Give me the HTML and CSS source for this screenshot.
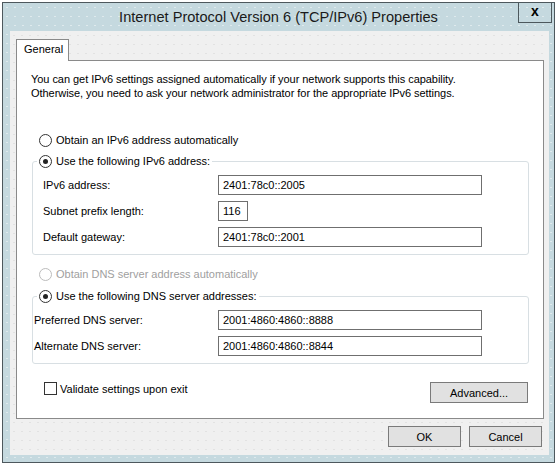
FILE: index.html
```html
<!DOCTYPE html>
<html lang="en">
<head>
    <meta charset="UTF-8">
    <title>Internet Protocol Version 6 (TCP/IPv6) Properties</title>
    <link rel="stylesheet" href="styles.css">
</head>
<body>
    <div class="window">
        <div class="titlebar">
            <span class="title">Internet Protocol Version 6 (TCP/IPv6) Properties</span>
            <span class="close">x</span>
        </div>

        <div class="client">
            <div class="tabs">
                <div class="tab">General</div>
            </div>

            <div class="panel">
                <p class="intro">You can get IPv6 settings assigned automatically if your network supports this capability.<br>Otherwise, you need to ask your network administrator for the appropriate IPv6 settings.</p>

                <label class="option first"><span class="radio"></span>Obtain an IPv6 address automatically</label>

                <fieldset class="group ip-group">
                    <legend><span class="radio checked"></span>Use the following IPv6 address:</legend>
                    <div class="row">
                        <span class="label">IPv6 address:</span>
                        <input class="field" type="text" value="2401:78c0::2005" readonly>
                    </div>
                    <div class="row">
                        <span class="label">Subnet prefix length:</span>
                        <input class="field short" type="text" value="116" readonly>
                    </div>
                    <div class="row">
                        <span class="label">Default gateway:</span>
                        <input class="field" type="text" value="2401:78c0::2001" readonly>
                    </div>
                </fieldset>

                <label class="option disabled"><span class="radio"></span>Obtain DNS server address automatically</label>

                <fieldset class="group dns-group">
                    <legend><span class="radio checked"></span>Use the following DNS server addresses:</legend>
                    <div class="row">
                        <span class="label">Preferred DNS server:</span>
                        <input class="field" type="text" value="2001:4860:4860::8888" readonly>
                    </div>
                    <div class="row">
                        <span class="label">Alternate DNS server:</span>
                        <input class="field" type="text" value="2001:4860:4860::8844" readonly>
                    </div>
                </fieldset>

                <div class="panel-foot">
                    <label class="check"><span class="box"></span>Validate settings upon exit</label>
                    <button class="btn advanced">Advanced...</button>
                </div>
            </div>

            <div class="actions">
                <button class="btn">OK</button>
                <button class="btn">Cancel</button>
            </div>
        </div>
    </div>
</body>
</html>
```

FILE: styles.css
```css
:root {
    --frame-color: #c5d9df;
    --frame-border: #4d585d;
    --face-color: #f0f0f0;
    --panel-border: #8a8a8a;
    --group-border: #d8dfe3;
    --text-color: #000;
}

* {
    box-sizing: border-box;
    margin: 0;
    padding: 0;
}

body {
    font-family: "Liberation Sans", Arial, sans-serif;
    font-size: 11px;
    color: var(--text-color);
    background: #fff;
}

.window {
    position: relative;
    width: 553px;
    height: 461px;
    margin: 2px 0 0 2px;
    border: 1px solid var(--frame-border);
    background-color: var(--frame-color);
    background-image: radial-gradient(circle, rgba(255,255,255,0.45) 0.7px, transparent 1px);
    background-size: 8px 9px;
}

.titlebar {
    height: 28px;
    display: flex;
    align-items: center;
    justify-content: center;
    padding-bottom: 1px;
}

.title {
    font-size: 14.6px;
    color: #1a1a1a;
}

.close {
    position: absolute;
    top: -1px;
    right: 2px;
    width: 34px;
    height: 21px;
    border: 1px solid var(--frame-border);
    display: flex;
    align-items: center;
    justify-content: center;
    font-size: 14px;
    font-weight: bold;
    line-height: 1;
    padding-bottom: 3px;
}

.client {
    width: 539px;
    height: 424px;
    margin-left: 7px;
    padding: 8px 0 0 6px;
    background-color: var(--face-color);
    background-image: radial-gradient(circle, rgba(0,0,0,0.06) 0.7px, transparent 1px);
    background-size: 8px 9px;
}

.tabs {
    display: flex;
}

.tab {
    position: relative;
    z-index: 1;
    width: 53px;
    height: 22px;
    margin-bottom: -1px;
    padding: 3px 0 0 7px;
    border: 1px solid var(--panel-border);
    border-bottom: none;
    background: #fff;
}

.panel {
    width: 528px;
    height: 359px;
    border: 1px solid var(--panel-border);
    background: #fff;
    padding-top: 11px;
}

.intro {
    margin-left: 14px;
    line-height: 14px;
    letter-spacing: -0.05px;
}

.option {
    display: flex;
    align-items: center;
    height: 16px;
    margin-left: 22px;
}

.option.first {
    margin-top: 32px;
}

.option.disabled {
    margin-top: 11px;
    color: #a0a0a0;
}

.radio {
    width: 13px;
    height: 13px;
    margin-right: 4px;
    border: 1px solid #333;
    border-radius: 50%;
    background: #fff;
    display: flex;
    align-items: center;
    justify-content: center;
    flex-shrink: 0;
}

.radio.checked::after {
    content: "";
    width: 5px;
    height: 5px;
    border-radius: 50%;
    background: #222;
}

.disabled .radio {
    border-color: #bcbcbc;
}

.group {
    width: 497px;
    margin-left: 15px;
    border: 1px solid var(--group-border);
    border-radius: 3px;
    padding: 6px 0 7px 0;
}

.group legend {
    display: flex;
    align-items: center;
    height: 16px;
    margin-left: 4px;
    padding: 0 2px;
}

.ip-group {
    margin-top: 5px;
}

.dns-group {
    margin-top: 6px;
}

.row {
    display: flex;
    align-items: center;
    height: 20px;
}

.ip-group .row {
    padding-left: 10px;
}

.dns-group .row {
    padding-left: 1px;
}

.row + .row {
    margin-top: 6px;
}

.ip-group .label {
    width: 175px;
}

.dns-group .label {
    width: 184px;
}

.field {
    width: 264px;
    height: 20px;
    border: 1px solid #6f6f6f;
    padding: 0 4px;
    font-family: inherit;
    font-size: 11px;
    color: #000;
    background: #fff;
    outline: none;
}

.field.short {
    width: 30px;
}

.panel-foot {
    display: flex;
    justify-content: space-between;
    align-items: flex-start;
    margin: 18px 15px 0 27px;
}

.check {
    display: flex;
    align-items: center;
    height: 13px;
}

.box {
    width: 13px;
    height: 13px;
    margin-right: 3px;
    border: 1px solid #333;
    background: #fff;
}

.btn {
    height: 21px;
    border: 1px solid #7a7a7a;
    background: #e1e1e1;
    font-family: inherit;
    font-size: 11px;
    color: #000;
}

.advanced {
    width: 98px;
}

.actions {
    display: flex;
    justify-content: flex-end;
    gap: 8px;
    margin-top: 7px;
    padding-right: 7px;
}

.actions .btn {
    width: 73px;
}
```
